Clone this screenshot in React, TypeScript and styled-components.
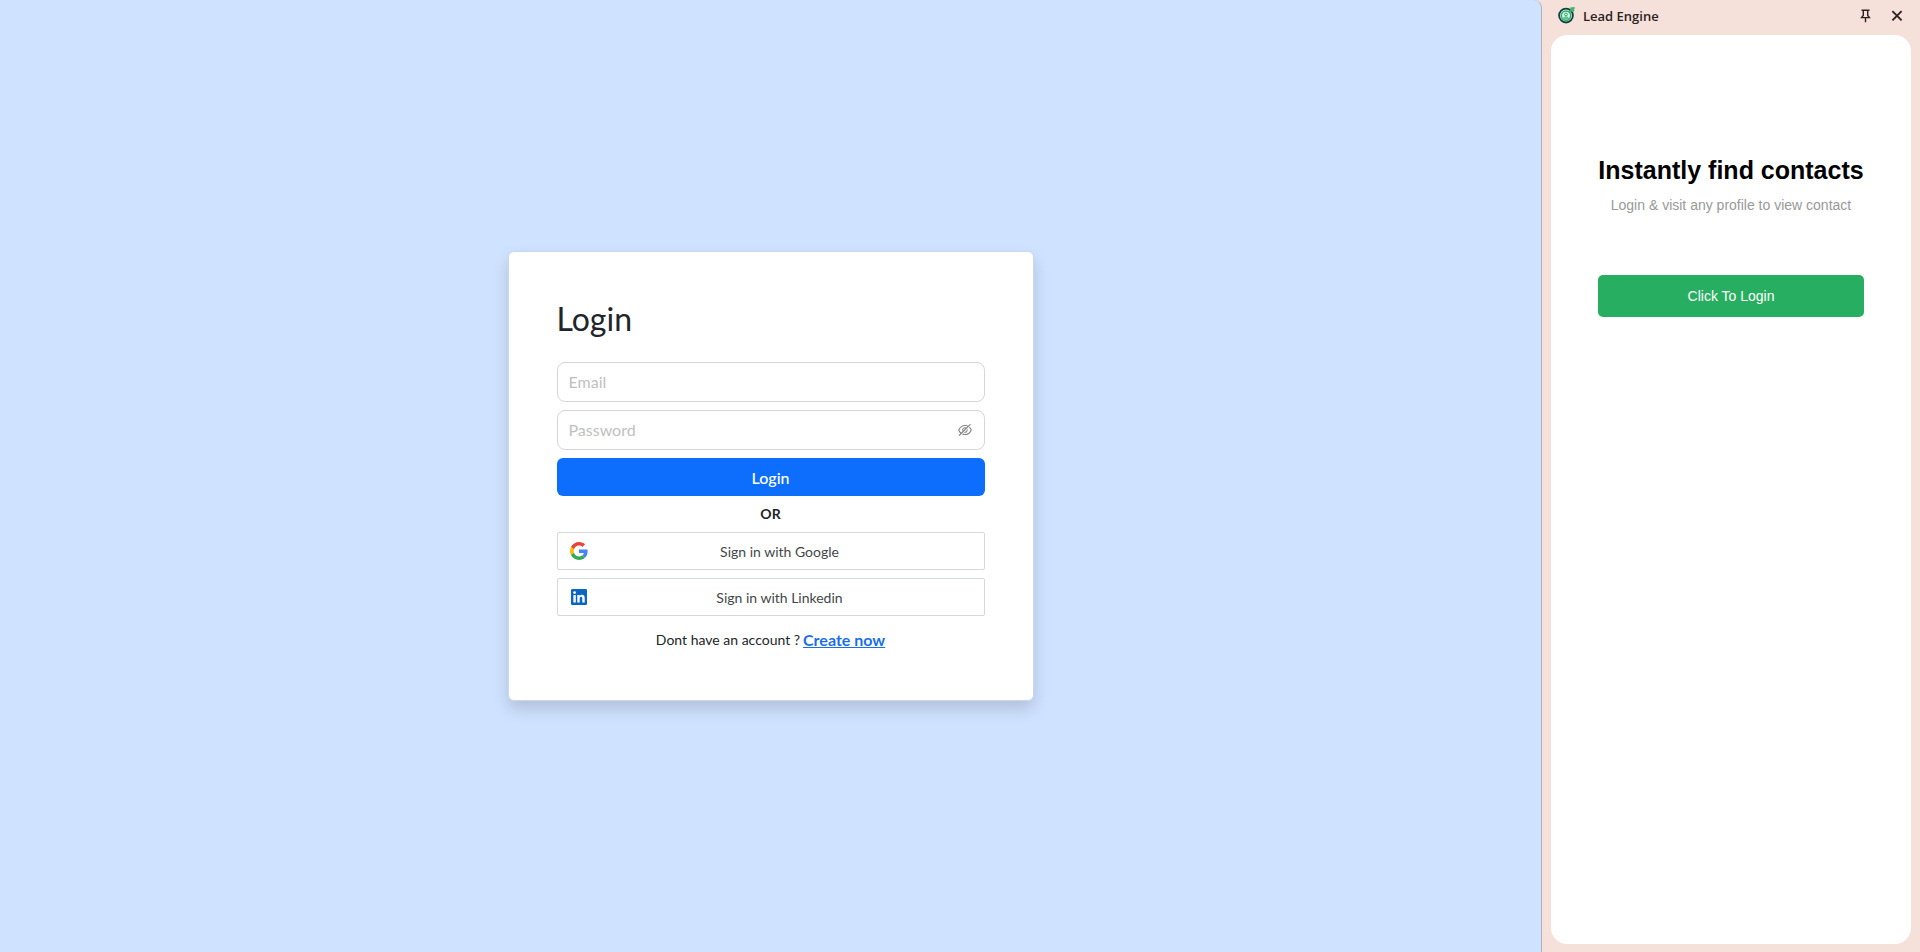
import React from 'react';
import styled, { createGlobalStyle } from 'styled-components';
import { AiOutlineEyeInvisible } from 'react-icons/ai';

const GlobalStyle = createGlobalStyle`
  *, *::before, *::after { box-sizing: border-box; }
  body {
    margin: 0;
    background: #f5e0da;
    color: #212529;
    font: 14px/20px Lato, sans-serif;
  }
  button, input { font-family: inherit; }
`;

const Shell = styled.div`
  display: flex;
  min-height: 100vh;
`;

const Page = styled.main`
  flex: 1;
  display: flex;
  align-items: center;
  justify-content: center;
  background: #cfe2ff;
  border-right: 1px solid #b0b0bb;
  border-top-right-radius: 8px;
`;

const Card = styled.form`
  display: flex;
  flex-direction: column;
  gap: 8px;
  width: 100%;
  max-width: 526px;
  padding: 48px;
  background: #fff;
  border: 1px solid #cbd8ea;
  border-radius: 6px;
  box-shadow: 0 8px 16px rgba(0, 0, 0, 0.15);
`;

const Title = styled.h1`
  margin: 0 0 16px;
  font-size: 32px;
  line-height: 38px;
  font-weight: 400;
`;

const Field = styled.div`
  display: flex;
  align-items: center;
  height: 40px;
  padding: 0 11px;
  border: 1px solid #d6d6d9;
  border-radius: 8px;
`;

const TextInput = styled.input`
  flex: 1;
  min-width: 0;
  padding: 0;
  border: 0;
  outline: 0;
  background: none;
  color: #212529;
  font-size: 16px;
  line-height: 24px;
  &::placeholder { color: #bfbfbf; opacity: 1; }
`;

const IconButton = styled.button<{ $color: string }>`
  display: flex;
  padding: 0;
  border: 0;
  background: none;
  color: ${(p) => p.$color};
  cursor: pointer;
`;

const SubmitButton = styled.button`
  height: 38px;
  border: 0;
  border-radius: 6px;
  background: #0d6efd;
  color: #fff;
  font-size: 16px;
  font-weight: 500;
  cursor: pointer;
`;

const Divider = styled.div`
  line-height: 20px;
  text-align: center;
  font-weight: 700;
`;

const ProviderButton = styled.button`
  display: flex;
  align-items: center;
  height: 38px;
  padding: 0 12px;
  border: 1px solid #d6d9dc;
  border-radius: 2px;
  background: #fff;
  color: #444749;
  font-size: 14px;
  cursor: pointer;
`;

const ProviderLabel = styled.span`
  flex: 1;
  text-align: center;
`;

const Signup = styled.p`
  display: flex;
  justify-content: center;
  align-items: center;
  gap: 3px;
  margin: 4px 0 0;
  line-height: 24px;
`;

const SignupLink = styled.a`
  color: #1a6fe8;
  font-size: 16px;
  font-weight: 700;
`;

const Sidebar = styled.aside`
  display: flex;
  flex-direction: column;
  width: 378px;
  padding: 0 9px 8px;
`;

const SidebarHeader = styled.header`
  display: flex;
  align-items: center;
  gap: 8px;
  height: 35px;
  padding: 0 6px 4px 7px;
`;

const SidebarTitle = styled.h2`
  flex: 1;
  margin: 0;
  color: #2b2222;
  font: 600 13px/20px 'Open Sans', sans-serif;
`;

const HeaderActions = styled.div`
  display: flex;
  align-items: center;
  gap: 16px;
`;

const Panel = styled.section`
  flex: 1;
  display: flex;
  justify-content: center;
  align-items: flex-start;
  padding-top: 120px;
  border-radius: 16px;
  background: #fff;
  font-family: 'Liberation Sans', Arial, sans-serif;
`;

const Pitch = styled.div`
  display: flex;
  flex-direction: column;
  text-align: center;
`;

const PitchTitle = styled.h2`
  margin: 0;
  color: #000;
  font-size: 25px;
  line-height: 30px;
  font-weight: 700;
`;

const PitchText = styled.p`
  margin: 10px 0 60px;
  color: #999;
  font-size: 14px;
  line-height: 20px;
`;

const PitchButton = styled.button`
  height: 42px;
  border: 0;
  border-radius: 5px;
  background: #28ae60;
  color: #fff;
  font-size: 14px;
  cursor: pointer;
`;

const GoogleLogo = () => (
  <svg width="18" height="18" viewBox="0 0 48 48" aria-hidden="true">
    <path fill="#ea4335" d="M24 9.5c3.54 0 6.71 1.22 9.21 3.6l6.85-6.85C35.9 2.38 30.47 0 24 0 14.62 0 6.51 5.38 2.56 13.22l7.98 6.19C12.43 13.72 17.74 9.5 24 9.5z" />
    <path fill="#4285f4" d="M46.98 24.55c0-1.57-.15-3.09-.38-4.55H24v9.02h12.94c-.58 2.96-2.26 5.48-4.78 7.18l7.73 6c4.51-4.18 7.09-10.36 7.09-17.65z" />
    <path fill="#fbbc05" d="M10.53 28.59c-.48-1.45-.76-2.99-.76-4.59s.27-3.14.76-4.59l-7.98-6.19C.92 16.46 0 20.12 0 24c0 3.88.92 7.54 2.56 10.78l7.97-6.19z" />
    <path fill="#34a853" d="M24 48c6.48 0 11.93-2.13 15.89-5.81l-7.73-6c-2.15 1.45-4.92 2.3-8.16 2.3-6.26 0-11.57-4.22-13.47-9.91l-7.98 6.19C6.51 42.62 14.62 48 24 48z" />
  </svg>
);

const LinkedinLogo = () => (
  <svg width="18" height="18" viewBox="0 0 18 18" aria-hidden="true">
    <rect x="1" y="1" width="16" height="16" rx="1.3" fill="#0a66c2" />
    <circle cx="4.6" cy="4.6" r="1.4" fill="#fff" />
    <path
      fill="#fff"
      d="M3.4 7h2.4v7.6H3.4zM7.3 7h2.3v1.1c.4-.7 1.2-1.3 2.3-1.3 2.3 0 2.8 1.5 2.8 3.6v4.2h-2.4v-3.8c0-1 0-2-1.2-2s-1.4.9-1.4 1.9v3.9H7.3z"
    />
  </svg>
);

const LeadEngineLogo = () => (
  <svg width="17" height="17" viewBox="0 0 17 17" fill="none" aria-hidden="true">
    <circle cx="8" cy="8.6" r="6.9" fill="#d7f3e2" stroke="#123f45" strokeWidth="1.8" />
    <circle cx="8" cy="8.6" r="4.7" stroke="#2fae69" strokeWidth="1.5" />
    <circle cx="8" cy="7.4" r="1.4" stroke="#2fae69" />
    <path d="M5.5 11.2c.4-1.6 4.6-1.6 5 0z" stroke="#2fae69" />
    <path d="M11 5.6 13.2 3.4" stroke="#2fae69" strokeWidth="1.6" />
    <path d="M12 .6 16.8 0 16 4.8 12.6 4.4z" fill="#43b56f" />
  </svg>
);

const PinIcon = () => (
  <svg width="16" height="16" viewBox="0 0 16 16" fill="none" stroke="currentColor" strokeWidth="1.4" aria-hidden="true">
    <path d="M4.5 2.2h8M6.3 2.2v5.2L4.6 9.6h7.8l-1.7-2.2V2.2M8.5 9.6v4.6" />
  </svg>
);

const CloseIcon = () => (
  <svg width="16" height="16" viewBox="0 0 16 16" fill="none" stroke="currentColor" strokeWidth="1.9" aria-hidden="true">
    <path d="M3.4 3.1l9.2 9.2M12.6 3.1l-9.2 9.2" />
  </svg>
);

export default function App() {
  return (
    <>
      <GlobalStyle />
      <Shell>
        <Page>
          <Card onSubmit={(e: React.FormEvent) => e.preventDefault()}>
            <Title>Login</Title>
            <Field>
              <TextInput type="email" placeholder="Email" aria-label="Email" />
            </Field>
            <Field>
              <TextInput type="password" placeholder="Password" aria-label="Password" />
              <IconButton type="button" $color="#858585" aria-label="Show password">
                <AiOutlineEyeInvisible size={16} />
              </IconButton>
            </Field>
            <SubmitButton type="submit">Login</SubmitButton>
            <Divider>OR</Divider>
            <ProviderButton type="button">
              <GoogleLogo />
              <ProviderLabel>Sign in with Google</ProviderLabel>
            </ProviderButton>
            <ProviderButton type="button">
              <LinkedinLogo />
              <ProviderLabel>Sign in with Linkedin</ProviderLabel>
            </ProviderButton>
            <Signup>
              <span>Dont have an account ?</span>
              <SignupLink href="#signup">Create now</SignupLink>
            </Signup>
          </Card>
        </Page>
        <Sidebar>
          <SidebarHeader>
            <LeadEngineLogo />
            <SidebarTitle>Lead Engine</SidebarTitle>
            <HeaderActions>
              <IconButton type="button" $color="#2b2222" aria-label="Pin side panel">
                <PinIcon />
              </IconButton>
              <IconButton type="button" $color="#2b2222" aria-label="Close side panel">
                <CloseIcon />
              </IconButton>
            </HeaderActions>
          </SidebarHeader>
          <Panel>
            <Pitch>
              <PitchTitle>Instantly find contacts</PitchTitle>
              <PitchText>Login &amp; visit any profile to view contact</PitchText>
              <PitchButton type="button">Click To Login</PitchButton>
            </Pitch>
          </Panel>
        </Sidebar>
      </Shell>
    </>
  );
}
